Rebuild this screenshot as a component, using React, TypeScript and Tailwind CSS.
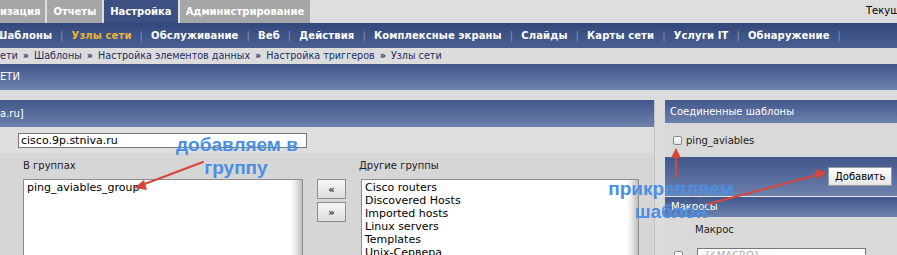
import React from 'react';

const navItems = ['Шаблоны', 'Узлы сети', 'Обслуживание', 'Веб', 'Действия', 'Комплексные экраны', 'Слайды', 'Карты сети', 'Услуги IT', 'Обнаружение'];
const crumbs = ['ети', 'Шаблоны', 'Настройка элементов данных', 'Настройка триггеров', 'Узлы сети'];
const otherGroups = ['Cisco routers', 'Discovered Hosts', 'Imported hosts', 'Linux servers', 'Templates', 'Unix-Сервера', 'Windows servers'];

function ListBox({ items }: { items: string[] }) {
  return (
    <div className="h-[90px] overflow-hidden border border-[#8c8c8c] bg-white pl-[3px] pt-[1px] leading-[13px] text-[11px] text-black shadow-[inset_-11px_0_8px_-7px_rgba(0,0,0,0.3)]">
      {items.map((item) => (
        <div key={item}>{item}</div>
      ))}
    </div>
  );
}

export default function App() {
  return (
    <div className="relative h-[255px] w-[897px] overflow-hidden bg-[#dcdcdc] font-['DejaVu_Sans',sans-serif] text-[10px] whitespace-nowrap">
      {/* top tabs */}
      <div className="flex h-[23px] bg-[#dedede]">
        <div className="flex w-[866px] shrink-0 gap-[2px] font-bold leading-[23px] text-white">
          <span className="bg-[#a6a6a6] pr-[5px]">изация</span>
          <span className="bg-[#a6a6a6] px-[6px]">Отчеты</span>
          <span className="bg-[#3c5081] px-[6px]">Настройка</span>
          <span className="bg-[#a6a6a6] px-[6px]">Администрирование</span>
        </div>
        <span className="leading-[22px] text-black">Текущий пользователь: Admin</span>
      </div>

      {/* main menu */}
      <div className="flex h-[25px] items-center bg-gradient-to-b from-[#33487a] to-[#4a6093] font-bold tracking-[0.12px] text-white">
        <div className="-ml-[5px] flex items-center">
          {navItems.map((item) => (
            <React.Fragment key={item}>
              <span className={item === 'Узлы сети' ? 'text-[#e8b53b]' : ''}>{item}</span>
              <span className="mx-[8px] font-normal text-[#8793b3]">|</span>
            </React.Fragment>
          ))}
        </div>
      </div>

      {/* breadcrumbs */}
      <div className="flex h-[16px] items-center bg-[#dcdcdc] text-[9.6px] text-[#1b2d66]">
        {crumbs.map((c, i) => (
          <React.Fragment key={c}>
            {i > 0 && <span className="mx-[5px] font-bold">»</span>}
            <span>{c}</span>
          </React.Fragment>
        ))}
      </div>

      {/* page title */}
      <div className="h-[26px] bg-gradient-to-b from-[#41578b] to-[#6e82ae] leading-[26px] text-white">ЕТИ</div>
      <div className="h-[10px]" />

      <div className="flex gap-[10px]">
        {/* host form */}
        <div className="w-[655px] shrink-0 border-r border-[#c2c2c2]">
          <div className="h-[27px] bg-gradient-to-b from-[#41578b] to-[#6e82ae] leading-[27px] text-white">a.ru]</div>
          <div className="flex h-[26px] items-center bg-[#dedede] pl-[18px]">
            <div className="h-[15px] w-[289px] border border-[#777] bg-white px-[2px] leading-[13px] text-[11px] text-black">cisco.9p.stniva.ru</div>
          </div>
          <div className="flex h-[110px] bg-[#d6d6d6] pt-[7px] text-[#222]">
            <div className="ml-[23px] w-[280px]">
              <div className="leading-[12px]">В группах</div>
              <div className="mt-[7px]">
                <ListBox items={['ping_aviables_group']} />
              </div>
            </div>
            <div className="ml-[14px] mt-[19px] flex flex-col gap-[3px]">
              <button className="h-[20px] w-[29px] border border-[#8c8c8c] bg-gradient-to-b from-[#f6f6f6] to-[#dddddd] text-[10px] font-bold text-[#333]">«</button>
              <button className="h-[20px] w-[29px] border border-[#8c8c8c] bg-gradient-to-b from-[#f6f6f6] to-[#dddddd] text-[10px] font-bold text-[#333]">»</button>
            </div>
            <div className="ml-[13px] w-[280px]">
              <div className="leading-[12px]">Другие группы</div>
              <div className="ml-[2px] mt-[7px]">
                <ListBox items={otherGroups} />
              </div>
            </div>
          </div>
        </div>

        {/* linked templates */}
        <div className="flex-1">
          <div className="h-[23px] bg-gradient-to-b from-[#41578b] to-[#6e82ae] pl-[5px] leading-[23px] text-white">Соединенные шаблоны</div>
          <div className="flex h-[34px] items-center gap-[4px] bg-[#d9d9d9] pl-[8px] text-[#222]">
            <span className="h-[9px] w-[9px] rounded-[2px] border border-[#8a8a8a] bg-gradient-to-b from-white to-[#e4e4e4]" />
            <span>ping_aviables</span>
          </div>
          <div className="flex h-[39px] items-center gap-[7px] bg-gradient-to-b from-[#41578b] to-[#6e82ae] pl-[163px]">
            <button className="h-[19px] border border-[#9a9a9a] bg-gradient-to-b from-white to-[#e6e6e6] px-[6px] text-[10px] text-black">Добавить</button>
            <button className="h-[19px] border border-[#9a9a9a] bg-gradient-to-b from-white to-[#e6e6e6] px-[6px] text-[10px] text-black">Удалить</button>
          </div>
          <div className="h-[1px] bg-[#e6e6e6]" />
          <div className="h-[20px] bg-gradient-to-b from-[#41578b] to-[#6e82ae] pl-[6px] leading-[20px] text-white">Макросы</div>
          <div className="h-[60px] bg-[#d9d9d9] text-[#222]">
            <div className="pl-[30px] pt-[7px] leading-[12px]">Макрос</div>
            <div className="mt-[12px] flex items-start">
              <span className="ml-[9px] mt-[3px] h-[9px] w-[9px] rounded-[2px] border border-[#8a8a8a] bg-gradient-to-b from-white to-[#e4e4e4]" />
              <div className="ml-[14px] h-[16px] w-[169px] border border-[#777] bg-white px-[6px] leading-[14px] text-[#aaa]">{'{$MACRO}'}</div>
            </div>
          </div>
        </div>
      </div>

      {/* annotations */}
      <div className="absolute left-[176px] top-[133px] w-[120px] text-center font-['Liberation_Sans',sans-serif] text-[19px] font-bold leading-[23px] text-[#4a8fe3]">
        добавляем в<br />группу
      </div>
      <div className="absolute left-[606px] top-[177px] w-[130px] text-center font-['Liberation_Sans',sans-serif] text-[19px] font-bold leading-[23px] text-[#4a8fe3]">
        прикрепляем<br />шаблон
      </div>
      <svg className="pointer-events-none absolute inset-0" width="897" height="255" viewBox="0 0 897 255">
        <g stroke="#d8453b" strokeWidth="2" fill="#d8453b" strokeLinecap="round">
          <line x1="203" y1="162" x2="142" y2="185" />
          <polygon points="134,188 144,180 147,190" stroke="none" />
          <line x1="676" y1="177" x2="676" y2="156" />
          <polygon points="676,148 671,158 681,158" stroke="none" />
          <line x1="708" y1="204" x2="817" y2="175" />
          <polygon points="826,172 815,169 818,180" stroke="none" />
        </g>
      </svg>
    </div>
  );
}
